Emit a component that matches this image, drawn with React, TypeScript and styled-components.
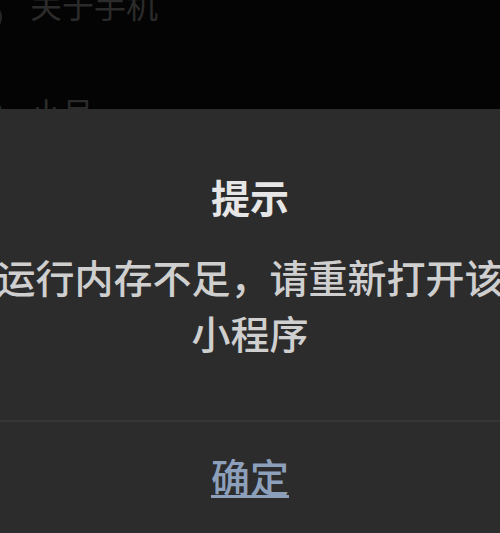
import React from 'react'
import styled, { createGlobalStyle } from 'styled-components'

const GlobalStyle = createGlobalStyle`
  html, body {
    margin: 0;
    padding: 0;
    background: #040404;
    overflow: hidden;
  }
  body {
    font-family: "Noto Sans CJK SC", "Noto Sans", sans-serif;
  }
`

const Screen = styled.div`
  display: flex;
  flex-direction: column;
  width: 500px;
  height: 533px;
  overflow: hidden;
`

const SettingsPeek = styled.div`
  height: 109px;
  flex-shrink: 0;
  overflow: hidden;
  background: #040404;
`

const SettingsList = styled.ul`
  list-style: none;
  margin: -50px 0 0;
  padding: 0;
`

const SettingsRow = styled.li`
  display: flex;
  align-items: center;
  gap: 28px;
  height: 108px;
  margin-left: -27px;
`

const RowIcon = styled.span<{ $tone: string; $drop: number }>`
  width: 23px;
  height: 23px;
  border-radius: 50%;
  border: 3px solid ${(p) => p.$tone};
  flex-shrink: 0;
  margin-top: ${(p) => p.$drop}px;
`

const RowLabel = styled.span`
  font-size: 32px;
  line-height: 32px;
  color: #2b2b2b;
`

const Dialog = styled.section`
  flex: 1;
  display: flex;
  flex-direction: column;
  align-items: center;
  background: #2c2c2c;
  padding-top: 59px;
`

const Title = styled.h2`
  margin: 0;
  font-size: 39px;
  line-height: 57px;
  font-weight: 700;
  color: #e6e6e6;
`

const Message = styled.p`
  margin: 23px 0 0;
  width: 520px;
  font-size: 39px;
  line-height: 56px;
  font-weight: 500;
  text-align: center;
  color: #cfcfcf;
`

const Divider = styled.hr`
  align-self: stretch;
  margin: 60px 0 0;
  border: none;
  height: 2px;
  background: #363636;
`

const ConfirmButton = styled.button`
  margin-top: 25px;
  padding: 0;
  border: none;
  background: transparent;
  font-family: inherit;
  font-size: 39px;
  line-height: 57px;
  font-weight: 500;
  color: #8c9fbb;
  text-decoration: underline;
  text-decoration-thickness: 3px;
  text-underline-offset: 3px;
  cursor: pointer;
`

export default function App() {
  return (
    <>
      <GlobalStyle />
      <Screen>
        <SettingsPeek>
          <SettingsList>
            <SettingsRow>
              <RowIcon $tone="#262626" $drop={26} />
              <RowLabel>关于手机</RowLabel>
            </SettingsRow>
            <SettingsRow>
              <RowIcon $tone="#1c2b2b" $drop={0} />
              <RowLabel>小号</RowLabel>
            </SettingsRow>
          </SettingsList>
        </SettingsPeek>
        <Dialog>
          <Title>提示</Title>
          <Message>运行内存不足，请重新打开该小程序</Message>
          <Divider />
          <ConfirmButton>确定</ConfirmButton>
        </Dialog>
      </Screen>
    </>
  )
}
